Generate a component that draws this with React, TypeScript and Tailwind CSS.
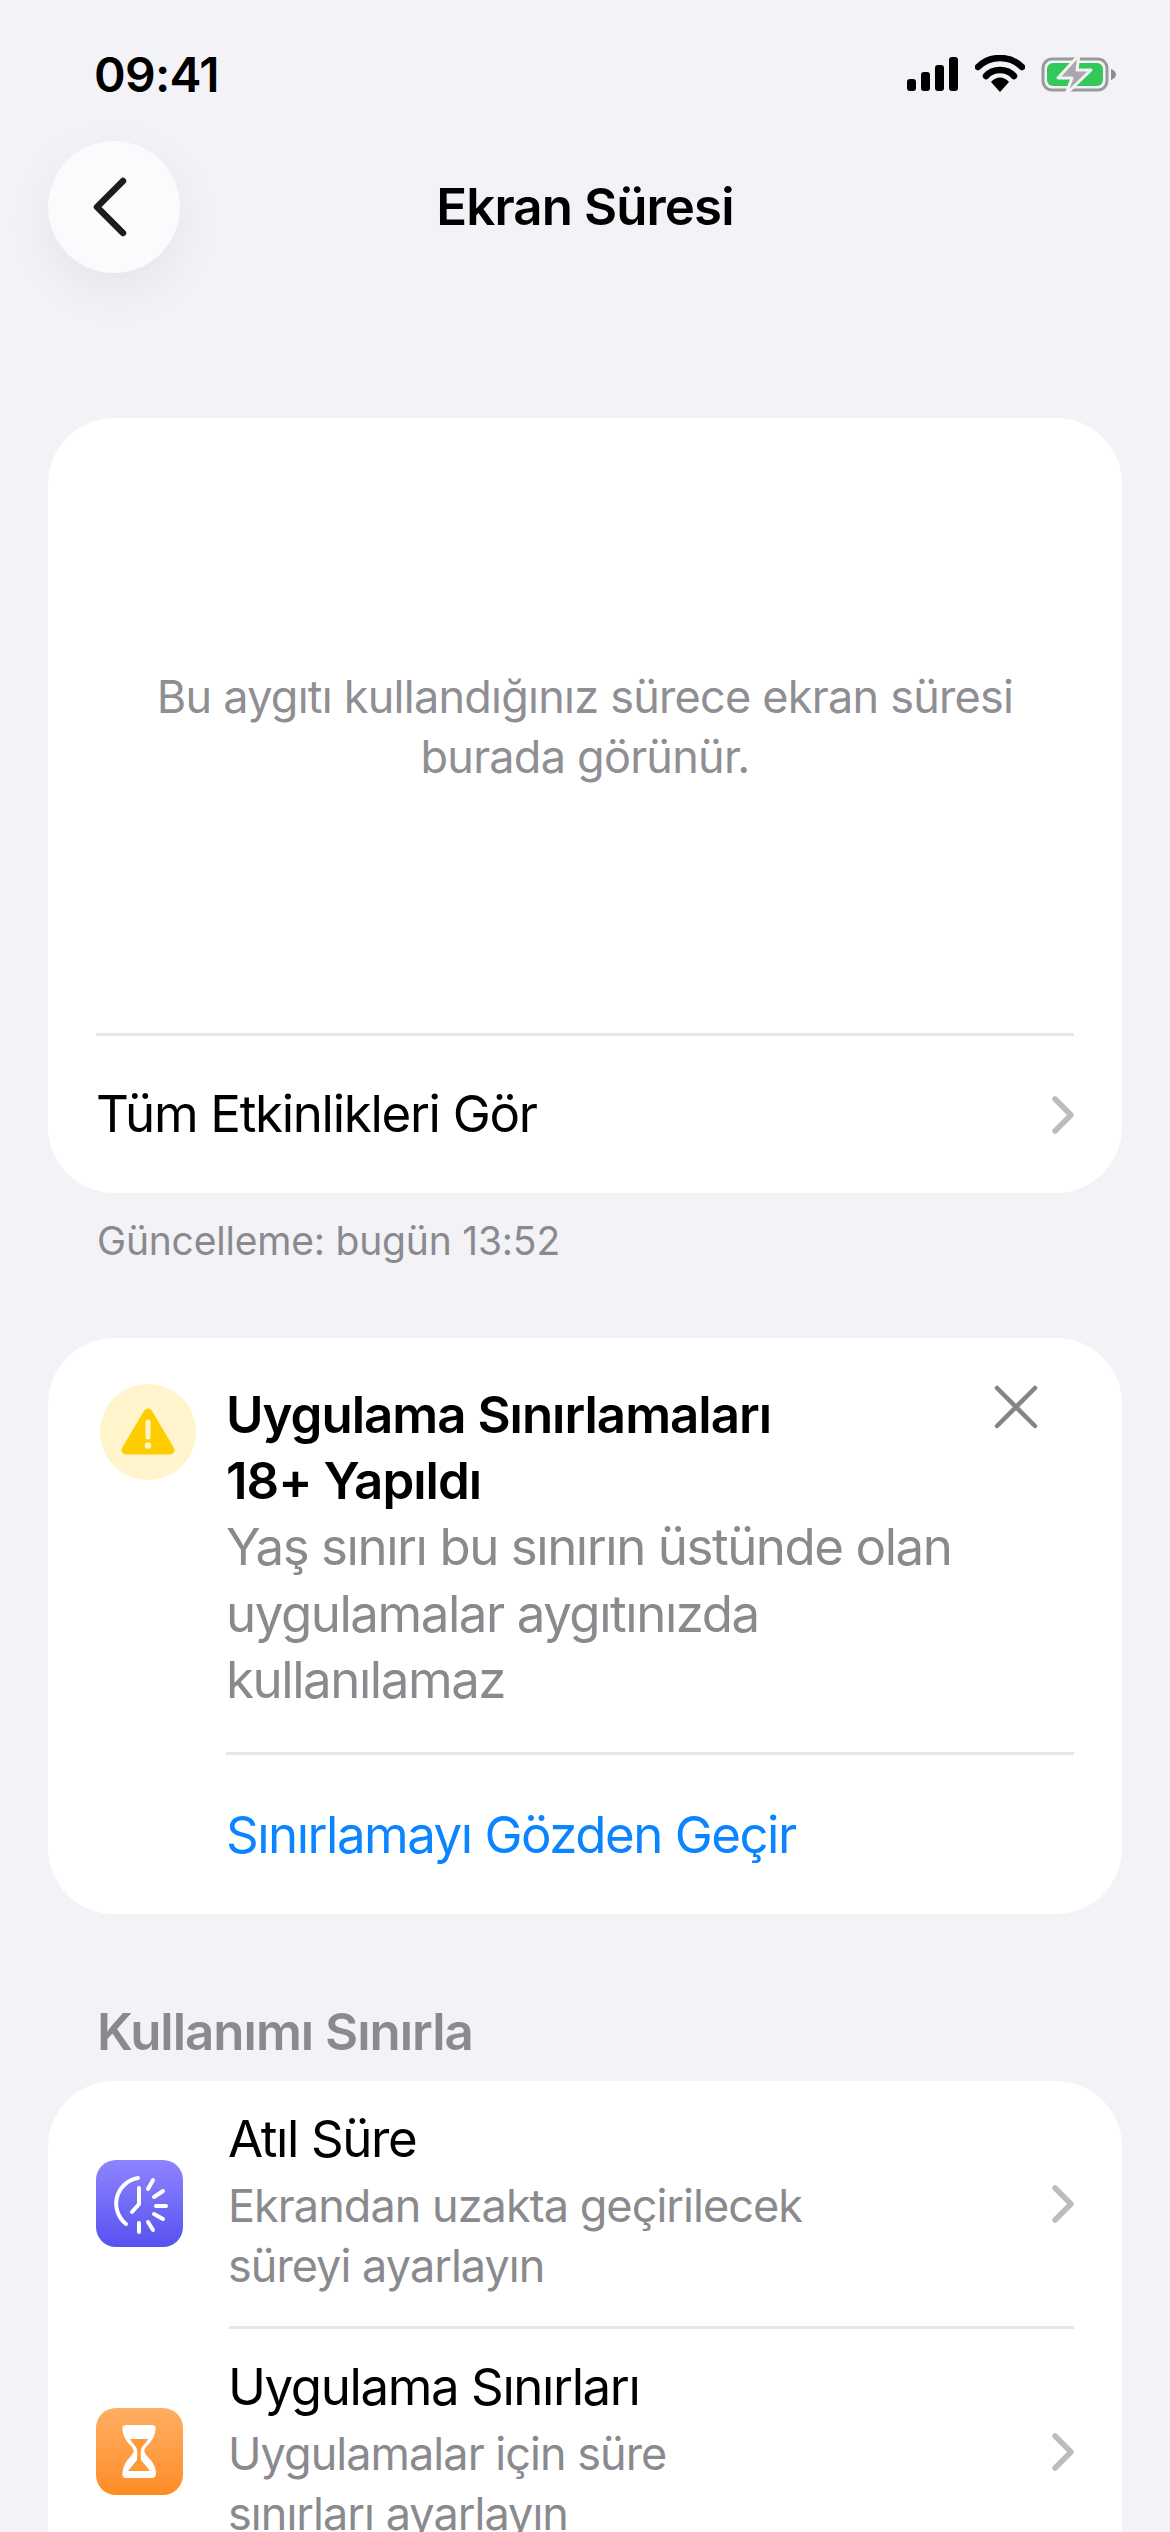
import React from "react";

function Chevron() {
  return (
    <svg width="26" height="40" viewBox="0 0 26 40" className="mr-[-2px] shrink-0">
      <path d="M5 4 L21 20 L5 36" fill="none" stroke="#bcbcc0" strokeWidth="5.5" strokeLinecap="round" strokeLinejoin="round" />
    </svg>
  );
}

function StatusIcons() {
  return (
    <div className="mt-[3px] flex items-center">
      <svg width="52" height="36" viewBox="0 0 52 36" className="mr-[16px]">
        <rect x="0" y="23" width="9" height="12" rx="3" fill="#000" />
        <rect x="14" y="16" width="9" height="19" rx="3" fill="#000" />
        <rect x="28" y="9" width="9" height="26" rx="3" fill="#000" />
        <rect x="42" y="1" width="9" height="34" rx="3" fill="#000" />
      </svg>
      <svg width="50" height="38" viewBox="0 0 50 38" className="mr-[16px]">
        <path d="M3 12 C15 0 35 0 47 12" fill="none" stroke="#000" strokeWidth="6.5" strokeLinecap="round" strokeLinejoin="round" />
        <path d="M11 21 C18 13 32 13 39 21" fill="none" stroke="#000" strokeWidth="6.5" strokeLinecap="round" />
        <path d="M16 27 C21 21 29 21 34 27 L25 37 Z" fill="#000" />
      </svg>
      <svg width="76" height="40" viewBox="0 0 76 40">
        <rect x="2" y="5" width="64" height="31" rx="9" fill="none" stroke="#9a9a9c" strokeWidth="3" />
        <rect x="6" y="9" width="56" height="23" rx="6" fill="#34c759" />
        <path d="M70 15 C73 16 75 18 75 20.5 C75 23 73 25 70 26 Z" fill="#8e8e90" />
        <path d="M38 1 L17 24 H31 L25 40 L50 16 H36 Z" fill="#a9a9ab" stroke="#f2f2f7" strokeWidth="3" strokeLinejoin="round" />
      </svg>
    </div>
  );
}

function IdleIcon() {
  return (
    <div className="flex h-[87px] w-[87px] shrink-0 items-center justify-center rounded-[20px] bg-linear-to-b from-[#8f84ff] to-[#5850f0]">
      <svg width="87" height="87" viewBox="0 0 87 87" fill="none" stroke="#fff" strokeWidth="4" strokeLinecap="round">
        <path d="M42 18 A26 26 0 0 0 30 64" />
        <path d="M43 28 V44 L36 52" />
        <path d="M52 29 L57 20" />
        <path d="M58 37 L67 31" />
        <path d="M60 46 H70" />
        <path d="M58 54 L67 59" />
        <path d="M52 62 L57 70" />
        <path d="M43 63 V72" />
      </svg>
    </div>
  );
}

function HourglassIcon() {
  return (
    <div className="flex h-[87px] w-[87px] shrink-0 items-center justify-center rounded-[20px] bg-linear-to-b from-[#ffae62] to-[#ff8c22]">
      <svg width="87" height="87" viewBox="0 0 87 87">
        <path d="M30 17 H56 C58.5 17 60 18.5 59.5 21 C59 28 56 33 51 38 C47.5 41.5 47.5 44 51 48 C56 53 59.5 58 60 65 C60 68 58.5 70 56 70 H30 C27.5 70 26 68 26.5 65 C27 58 30 53 35 48 C38.5 44 38.5 41.5 35 38 C30 33 27 28 26.500 21 C26 18.500 27.500 17 30 17 Z" fill="#fff" />
        <path d="M34 31 H52 C50 35 47 37 45.500 40 C44.500 42 44.500 46 45 52 L54 63 H32 L41 52 C41.500 46 41.500 42 40.500 40 C39 37 36 35 34 31 Z" fill="#ff9a3a" />
      </svg>
    </div>
  );
}

function LimitRow({ icon, title, l1, l2 }: { icon: React.ReactNode; title: string; l1: string; l2: string }) {
  return (
    <div className="flex h-[245px] items-center pl-[48px] pr-[48px]">
      {icon}
      <div className="ml-[45px] flex flex-1 flex-col pb-[6px]">
        <div className="mb-[4px] text-[51px] leading-[66px] tracking-[-1.4px] text-black">{title}</div>
        <div className="text-[45px] leading-[60px] tracking-[-0.95px] text-[#8a8a8e]">{l1}</div>
        <div className="text-[45px] leading-[60px] tracking-[-0.95px] text-[#8a8a8e]">{l2}</div>
      </div>
      <Chevron />
    </div>
  );
}

export default function App() {
  return (
    <div className="h-[2532px] w-[1170px] overflow-hidden bg-[#f2f2f7] font-['Inter','Liberation_Sans',sans-serif]">
      <div className="flex h-[141px] items-start justify-between pl-[94px] pr-[53px] pt-[51px]">
        <div className="text-[48px] font-semibold leading-[48px] tracking-[-0.7px] text-black">09:41</div>
        <StatusIcons />
      </div>

      <div className="relative flex h-[132px] items-center justify-center">
        <div className="absolute left-[48px] top-0 flex h-[132px] w-[132px] items-center justify-center rounded-full bg-[#fbfbfe] shadow-[0_16px_50px_rgba(0,0,0,0.06)]">
          <svg width="40" height="60" viewBox="0 0 40 60" className="mr-[8px]">
            <path d="M33 4 L7 30 L33 56" fill="none" stroke="#1c1c1e" strokeWidth="6.5" strokeLinecap="round" strokeLinejoin="round" />
          </svg>
        </div>
        <div className="text-[51px] font-semibold tracking-[-0.9px] text-black">Ekran Süresi</div>
      </div>

      <div className="mx-[48px] mt-[145px] flex h-[775px] flex-col rounded-[66px] bg-white px-[48px]">
        <div className="flex h-[615px] flex-col items-center justify-center pt-[2px] text-center text-[45px] leading-[60px] tracking-[-0.75px] text-[#8e8e93]">
          <div>Bu aygıtı kullandığınız sürece ekran süresi</div>
          <div>burada görünür.</div>
        </div>
        <div className="h-[3px] bg-[#e5e5ea]" />
        <div className="flex h-[157px] items-center justify-between">
          <div className="text-[51px] tracking-[-1.3px] text-black">Tüm Etkinlikleri Gör</div>
          <Chevron />
        </div>
      </div>

      <div className="ml-[97px] mt-[24px] text-[39px] leading-[48px] tracking-[-0.2px] text-[#8a8a8e]">Güncelleme: bugün 13:52</div>

      <div className="mx-[48px] mt-[73px] flex h-[576px] rounded-[66px] bg-white pl-[52px] pr-[48px]">
        <div className="mt-[46px] flex h-[96px] w-[96px] shrink-0 items-center justify-center rounded-full bg-[#fff4cc]">
          <svg width="54" height="48" viewBox="0 0 54 48">
            <path d="M27 5 L49 42 H5 Z" fill="#ffcc00" stroke="#ffcc00" strokeWidth="9" strokeLinejoin="round" />
            <path d="M27 14 V29" stroke="#fff4cc" strokeWidth="5" strokeLinecap="round" />
            <circle cx="27" cy="37.500" r="3.200" fill="#fff4cc" />
          </svg>
        </div>
        <div className="ml-[30px] flex flex-1 flex-col">
          <div className="relative pt-[44px]">
            <div className="text-[51px] font-semibold leading-[66px] tracking-[-1px] text-black">
              Uygulama Sınırlamaları
              <br />
              18+ Yapıldı
            </div>
            <div className="text-[51px] leading-[66.500px] tracking-[-1.45px] text-[#8a8a8e]">
              Yaş sınırı bu sınırın üstünde olan
              <br />
              uygulamalar aygıtınızda
              <br />
              kullanılamaz
            </div>
            <svg width="44" height="44" viewBox="0 0 44 44" className="absolute right-[36px] top-[47px]">
              <path d="M3 3 L41 41 M41 3 L3 41" stroke="#858589" strokeWidth="4.500" strokeLinecap="round" />
            </svg>
          </div>
          <div className="mt-[38px] h-[3px] bg-[#e5e5ea]" />
          <div className="flex flex-1 items-center pt-[2px] text-[51px] tracking-[-1.5px] text-[#0a84ff]">Sınırlamayı Gözden Geçir</div>
        </div>
      </div>

      <div className="ml-[97px] mt-[85px] text-[51px] font-semibold leading-[66px] tracking-[-1px] text-[#8a8a8e]">Kullanımı Sınırla</div>

      <div className="mx-[48px] mt-[16px] rounded-t-[66px] bg-white">
        <LimitRow icon={<IdleIcon />} title="Atıl Süre" l1="Ekrandan uzakta geçirilecek" l2="süreyi ayarlayın" />
        <div className="ml-[181px] mr-[48px] h-[3px] bg-[#e5e5ea]" />
        <LimitRow icon={<HourglassIcon />} title="Uygulama Sınırları" l1="Uygulamalar için süre" l2="sınırları ayarlayın" />
      </div>
    </div>
  );
}
